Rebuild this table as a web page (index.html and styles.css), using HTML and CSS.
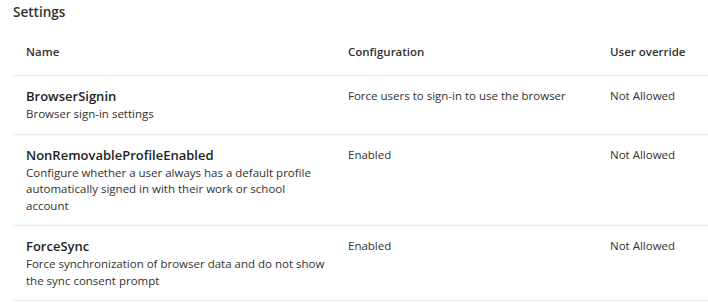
FILE: index.html
```html
<!doctype html>
<html lang="en">
  <head>
    <meta charset="UTF-8" />
    <meta name="viewport" content="width=device-width, initial-scale=1.0" />
    <title>Settings</title>
    <link rel="stylesheet" href="styles.css">
  </head>
  <body>
    <div class="panel">
      <h2 class="panel-title">Settings</h2>
      <table class="settings-table">
        <thead>
          <tr>
            <th class="col-name">Name</th>
            <th class="col-config">Configuration</th>
            <th class="col-override">User override</th>
          </tr>
        </thead>
        <tbody>
          <tr>
            <td class="name-cell">
              <div class="setting-name">BrowserSignin</div>
              <div class="setting-desc">Browser sign-in settings</div>
            </td>
            <td class="value">Force users to sign-in to use the browser</td>
            <td class="value">Not Allowed</td>
          </tr>
          <tr>
            <td class="name-cell">
              <div class="setting-name">NonRemovableProfileEnabled</div>
              <div class="setting-desc">Configure whether a user always has a default profile automatically signed in with their work or school account</div>
            </td>
            <td class="value">Enabled</td>
            <td class="value">Not Allowed</td>
          </tr>
          <tr>
            <td class="name-cell">
              <div class="setting-name">ForceSync</div>
              <div class="setting-desc">Force synchronization of browser data and do not show the sync consent prompt</div>
            </td>
            <td class="value">Enabled</td>
            <td class="value">Not Allowed</td>
          </tr>
        </tbody>
      </table>
    </div>
  </body>
</html>
```

FILE: styles.css
```css
* {
  margin: 0;
  padding: 0;
  box-sizing: border-box;
}
body {
  background: #fff;
  font-family: "Open Sans", "Noto Sans", sans-serif;
  color: #323130;
  overflow: hidden;
}
.panel {
  padding: 2px 0 0 13px;
}
.panel-title {
  font-size: 13.5px;
  line-height: 20px;
  font-weight: 600;
  color: #323130;
}
.settings-table {
  width: 720px;
  border-collapse: collapse;
  table-layout: fixed;
}
.col-name {
  width: 322px;
}
.col-config {
  width: 262px;
}
.settings-table th {
  text-align: left;
  font-size: 11.5px;
  line-height: 16px;
  font-weight: 600;
  color: #323130;
  padding: 22px 13px 15px;
  border-bottom: 1px solid #edebe9;
}
.settings-table td {
  vertical-align: top;
  padding: 10px 13px 11px;
  border-bottom: 1px solid #edebe9;
}
.settings-table td.name-cell {
  padding-right: 7px;
}
.setting-name {
  font-size: 13px;
  line-height: 20px;
  font-weight: 600;
  color: #201f1e;
}
.setting-desc {
  font-size: 11.5px;
  line-height: 16.5px;
  color: #323130;
}
.value {
  font-size: 11.5px;
  line-height: 20px;
  color: #323130;
}
```
